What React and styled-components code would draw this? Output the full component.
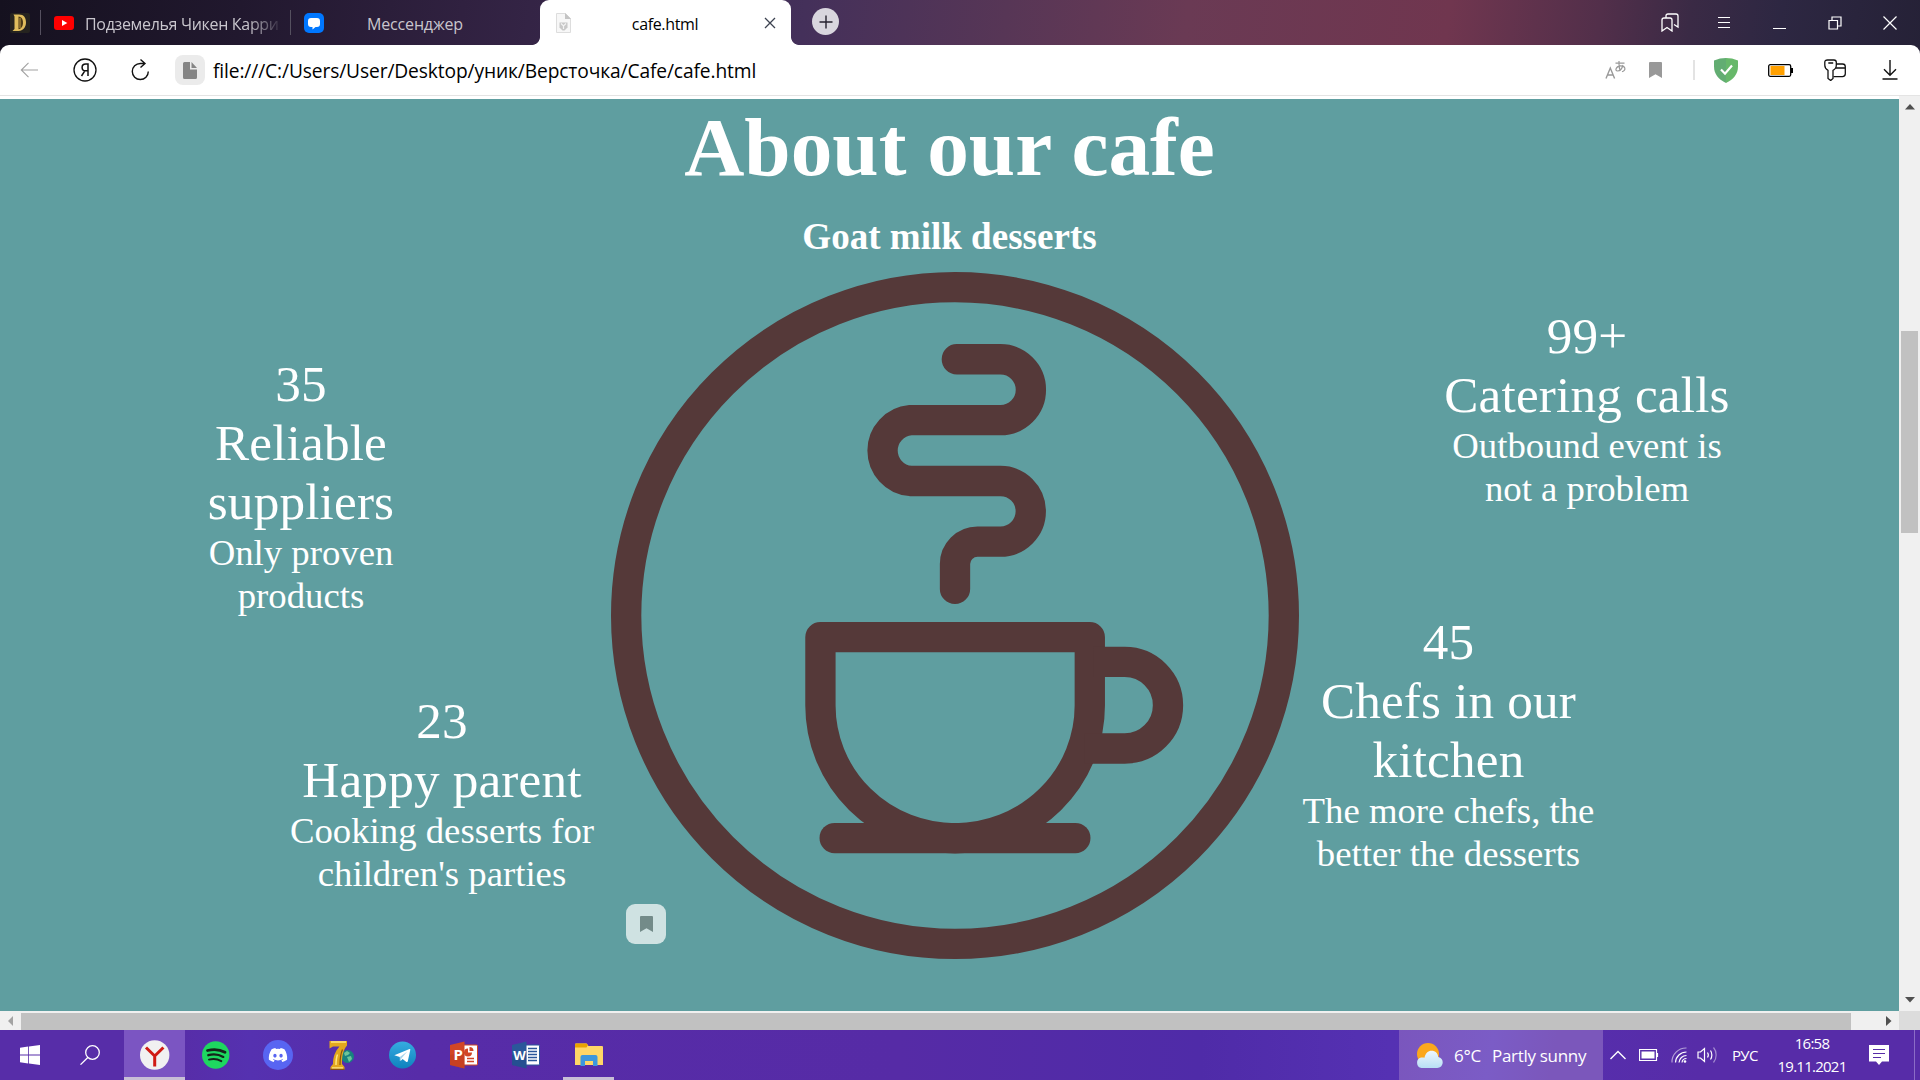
import React from "react";
import styled, { createGlobalStyle } from "styled-components";
import { FaDiscord } from "react-icons/fa";

const UI = `"Open Sans", "Noto Sans", sans-serif`;
const SERIF = `"Liberation Serif", "Times New Roman", serif`;

const GlobalStyle = createGlobalStyle`
  html, body { margin: 0; padding: 0; overflow: hidden; }
  * { box-sizing: border-box; }
  svg { display: block; flex: none; }
`;

const Screen = styled.div`
  width: 1920px;
  height: 1080px;
  display: flex;
  flex-direction: column;
  font-family: ${UI};
  background: #fff;
`;

/* ---------- browser chrome ---------- */

const Chrome = styled.header`
  flex: none;
  height: 96px;
  background: linear-gradient(97deg, #15111f 0, #21182e 240px, #302140 460px, #44305a 800px, #573656 1000px, #6a3a54 1180px, #70364f 1440px, #522f4a 1590px, #3a2a45 1680px, #2d2742 1770px, #252136 1920px);
`;

const TabStrip = styled.div`
  height: 45px;
  display: flex;
  align-items: center;
`;

const Slot = styled.div`
  flex: none;
  width: ${(p) => p.$w}px;
  margin-left: ${(p) => p.$gap || 0}px;
  height: 100%;
  display: flex;
  align-items: center;
  justify-content: center;
`;

const TabDivider = styled.i`
  flex: none;
  width: 1px;
  height: 25px;
  margin: 0 0 1px ${(p) => p.$gap}px;
  background: #55505f;
`;

const TabTitle = styled.span`
  flex: none;
  width: ${(p) => p.$w}px;
  margin-left: ${(p) => p.$gap}px;
  overflow: hidden;
  white-space: nowrap;
  text-align: ${(p) => (p.$center ? "center" : "left")};
  font-size: 16px;
  line-height: 24px;
  padding-top: 2px;
  letter-spacing: ${(p) => p.$track || 0}px;
  color: ${(p) => (p.$active ? "#000" : "#c9c6cd")};
  ${(p) => p.$fade && "mask-image: linear-gradient(90deg, #000 84%, rgba(0, 0, 0, 0.15) 100%);"}
`;

const ActiveTab = styled.div`
  flex: none;
  width: 251px;
  height: 45px;
  margin-left: ${(p) => p.$gap}px;
  display: flex;
  align-items: center;
  background: #fff;
  border-radius: 9px 9px 0 0;
  position: relative;
  &::before,
  &::after {
    content: "";
    position: absolute;
    bottom: 0;
    width: 8px;
    height: 8px;
  }
  &::before {
    left: -8px;
    background: radial-gradient(circle at 0 0, transparent 7.5px, #fff 8.3px);
  }
  &::after {
    right: -8px;
    background: radial-gradient(circle at 100% 0, transparent 7.5px, #fff 8.3px);
  }
`;

const NewTab = styled.div`
  flex: none;
  width: 27px;
  height: 27px;
  margin: 0 0 2px 21px;
  border-radius: 50%;
  background: #d9d6de;
  display: flex;
  align-items: center;
  justify-content: center;
`;

const Spacer = styled.div`
  flex: 1;
`;

const AddressBar = styled.div`
  height: 51px;
  display: flex;
  align-items: center;
  background: #fff;
  border-radius: 9px 9px 0 0;
  border-bottom: 1px solid #e4e4e4;
`;

const FileBadge = styled.div`
  flex: none;
  width: 30px;
  height: 30px;
  margin-left: 25px;
  border-radius: 8px;
  background: #ebebeb;
  display: flex;
  align-items: center;
  justify-content: center;
`;

const Url = styled.span`
  margin-left: 8px;
  padding-top: 2px;
  font-size: 19.2px;
  line-height: 30px;
  letter-spacing: -0.12px;
  white-space: nowrap;
  color: #000;
`;

const ToolDivider = styled.i`
  flex: none;
  width: 2px;
  height: 20px;
  margin-left: 31px;
  background: #e3e3e3;
`;

/* ---------- page ---------- */

const Viewport = styled.div`
  flex: none;
  height: 915px;
  display: flex;
`;

const Page = styled.main`
  flex: none;
  width: 1899px;
  margin-top: 3px;
  background: #5f9ea0;
  color: #fff;
  font-family: ${SERIF};
  text-align: center;
  position: relative;
  overflow: hidden;
`;

const Title = styled.h1`
  margin: 0;
  font-size: 83.3px;
  line-height: 96px;
`;

const Subtitle = styled.h2`
  margin: 0;
  padding-top: 21px;
  height: 77px;
  font-size: 37.05px;
  line-height: 42px;
`;

const Columns = styled.section`
  display: grid;
  grid-template-columns: 611px 688px 600px;
`;

const Column = styled.div`
  display: flex;
  flex-direction: column;
  align-items: flex-start;
`;

const Fact = styled.article`
  width: ${(p) => p.$w}px;
  margin: ${(p) => p.$top}px 0 0 ${(p) => p.$left}px;
  white-space: nowrap;
`;

const Big = styled.div`
  font-size: 51.2px;
  line-height: 59px;
  letter-spacing: 0.18px;
`;

const Small = styled.div`
  font-size: 36.75px;
  line-height: 43px;
`;

const SaveButton = styled.div`
  position: absolute;
  left: 626px;
  top: 805px;
  width: 40px;
  height: 40px;
  border-radius: 9px;
  background: #cfe2e2;
  display: flex;
  align-items: center;
  justify-content: center;
`;

const VerticalBar = styled.div`
  flex: none;
  width: 21px;
  background: #f0f0f0;
  display: flex;
  flex-direction: column;
  align-items: center;
  justify-content: space-between;
  padding: 8px 0 8px;
`;

const VerticalThumb = styled.div`
  width: 17px;
  height: 202px;
  margin-bottom: 244px;
  background: #c1c1c1;
`;

const HorizontalBar = styled.div`
  flex: none;
  height: 19px;
  background: #f0f0f0;
  display: flex;
  align-items: center;
`;

const HorizontalThumb = styled.div`
  width: 1830px;
  height: 17px;
  margin-top: 2px;
  background: #c1c1c1;
`;

const BarCorner = styled.div`
  width: 21px;
  height: 19px;
  margin-left: auto;
  background: #dcdcdc;
`;

/* ---------- taskbar ---------- */

const Taskbar = styled.footer`
  flex: none;
  height: 50px;
  display: flex;
  background: linear-gradient(90deg, #572da8 0, #572da8 180px, #5531b0 250px, #572ca8 420px, #562ba6 900px, #4f2ba8 1200px, #5531b3 1390px, #572ca8 1700px, #572ca8 100%);
  color: #fff;
`;

const AppButton = styled.div`
  flex: none;
  width: ${(p) => p.$w}px;
  margin-left: ${(p) => p.$gap || 0}px;
  display: flex;
  align-items: center;
  justify-content: center;
  background: ${(p) => (p.$active ? "#7b55c2" : "transparent")};
  border-bottom: ${(p) => (p.$open ? "3px solid #c8bfd6" : "0")};
  padding-top: ${(p) => (p.$open ? 3 : 0)}px;
`;

const Weather = styled.div`
  flex: none;
  width: 204px;
  display: flex;
  align-items: center;
  padding-left: 17px;
  background: linear-gradient(100deg, #7a56bd, #7b5cc6 45%, #7b57bb 75%);
`;

const TrayText = styled.span`
  flex: none;
  width: ${(p) => p.$w}px;
  margin-left: ${(p) => p.$gap}px;
  font-size: ${(p) => p.$size}px;
  line-height: 24px;
  padding-top: ${(p) => p.$drop || 0}px;
  letter-spacing: ${(p) => p.$track || 0}px;
  white-space: nowrap;
`;

const Clock = styled.div`
  flex: none;
  width: 90px;
  margin-left: 8px;
  display: flex;
  flex-direction: column;
  align-items: center;
  padding-top: 2px;
  font-size: 15px;
  line-height: 23px;
  letter-spacing: -0.75px;
`;

const PeekEdge = styled.div`
  flex: none;
  width: 6px;
  margin-left: 25px;
  border-left: 1px solid #8b6cc6;
`;

const Stroke = ({ w, h, d, color = "#fff", sw = 1.3, ...rest }) => (
  <svg width={w} height={h} viewBox={`0 0 ${w} ${h}`} fill="none" stroke={color} strokeWidth={sw} {...rest}>
    <path d={d} />
  </svg>
);

const Ribbon = ({ w, h, color }) => (
  <svg width={w} height={h} viewBox="0 0 13 16" preserveAspectRatio="none" fill={color}>
    <path d="M1 0h11a1 1 0 0 1 1 1v15l-6.5-3.7L0 16V1a1 1 0 0 1 1-1z" />
  </svg>
);

const CupEmblem = () => (
  <svg width="688" height="688" viewBox="24 26 1498 1498" fill="none" stroke="#553939" strokeWidth="66">
    <ellipse cx="773" cy="774" rx="716" ry="715" />
    <path strokeLinecap="round" d="M777 216H872A66 66 0 0 1 872 348.5H676A66.5 66.5 0 0 0 676 481H872A66 66 0 0 1 872 613H822A49 49 0 0 0 773 662V716" />
    <path strokeLinejoin="round" d="M480 821H1066.5V970A293.25 289 0 0 1 480 970Z" />
    <path d="M1075 875H1142.500A94 94 0 0 1 1142.500 1063.500H1055" />
    <path strokeLinecap="round" d="M511 1258.500H1035" />
  </svg>
);

const FactBlock = ({ big, small, ...place }) => (
  <Fact {...place}>
    {big.map((t) => <Big key={t}>{t}</Big>)}
    {small.map((t) => <Small key={t}>{t}</Small>)}
  </Fact>
);

const Triangle = ({ d, w = 10, h = 6, color = "#505050" }) => (
  <svg width={w} height={h} viewBox={`0 0 ${w} ${h}`} fill={color}><path d={d} /></svg>
);

function Tabs() {
  return (
    <TabStrip>
      <Slot $w={20} $gap={10}>
        <svg width="20" height="20" viewBox="0 0 20 20">
          <rect width="20" height="20" rx="2" fill="#25231f" />
          <path d="M3.500 1.500H9c5 0 7 3.500 7 8 0 4.800-3 8.500-7.500 8.500H2.500l2-2V3.500z" fill="#e0bd5c" />
          <path d="M8.500 3.500c3.300.5 4.500 3 4.500 6.200s-1.500 6-4.500 6.500z" fill="#4b3a16" />
          <path d="M10 5v10" stroke="#c49d42" strokeWidth="1" />
        </svg>
      </Slot>
      <TabDivider $gap={10} />
      <Slot $w={20} $gap={13}>
        <svg width="20" height="14" viewBox="0 0 20 14">
          <rect width="20" height="14" rx="3" fill="#f00" />
          <path d="M8 4l5.300 3L8 10z" fill="#fff" />
        </svg>
      </Slot>
      <TabTitle $w={193} $gap={11} $fade $track={-0.32}>Подземелья Чикен Карри</TabTitle>
      <TabDivider $gap={12} />
      <Slot $w={20} $gap={13}>
        <svg width="20" height="20" viewBox="0 0 20 20">
          <rect width="20" height="20" rx="5" fill="#07f" />
          <path d="M7 5h6q3 0 3 3v3q0 3-3 3h-1.500l-3 2.500v-2.500H7q-3 0-3-3V8q0-3 3-3z" fill="#fff" />
        </svg>
      </Slot>
      <TabTitle $w={120} $gap={31} $center $track={-0.17}>Мессенджер</TabTitle>
      <ActiveTab $gap={65}>
        <Slot $w={15} $gap={16}>
          <svg width="15" height="20" viewBox="0 0 15 20">
            <path d="M.5.5h9l5 5v14H.5z" fill="#f7f7f7" stroke="#ddd" />
            <path d="M9 0l6 6H9z" fill="#c4c4c4" />
            <path d="M3.500 9.500h8v5l-3 3h-2l-3-3z" fill="#c8c8c8" />
            <path d="M5 10.500l2.500 2.500L10 10.500M7.500 13v3" stroke="#f3f3f3" strokeWidth="1.200" fill="none" />
          </svg>
        </Slot>
        <TabTitle $w={90} $gap={49} $center $active $track={-0.35}>cafe.html</TabTitle>
        <Slot $w={12} $gap={54}>
          <Stroke w={12} h={12} color="#3c4250" d="M1 1l10 10M11 1L1 11" />
        </Slot>
      </ActiveTab>
      <NewTab><Stroke w={14} h={14} color="#26222f" sw={1.4} d="M7 .5v13M.5 7h13" /></NewTab>
      <Spacer />
      <Slot $w={18}>
        <Stroke w={18} h={19} d="M1 7q0-2 2-2h6q2 0 2 2v11l-5-3.500L1 18zM5 5V3q0-2 2-2h8q2 0 2 2v11l-4-2.500" />
      </Slot>
      <Slot $w={14} $gap={38}><Stroke w={14} h={12} d="M1 .5h12M1 5.500h12M1 10.500h12" sw={1.1} /></Slot>
      <Slot $w={14} $gap={42}><Stroke w={14} h={13} d="M0 12.500h13" sw={1} /></Slot>
      <Slot $w={14} $gap={41}><Stroke w={14} h={14} sw={1.2} d="M1 4.500h8.500V13H1zM4 4.500V1h9v9H9.500" /></Slot>
      <Slot $w={14} $gap={41}><Stroke w={14} h={14} sw={1.2} d="M.5.5l13 13M13.500.5l-13 13" /></Slot>
      <Slot $w={23} />
    </TabStrip>
  );
}

function Address() {
  return (
    <AddressBar>
      <Slot $w={18} $gap={20}><Stroke w={18} h={16} color="#a2a2a2" sw={1.1} d="M18 8H1.500M8.500.8L1.300 8l7.200 7.200" /></Slot>
      <Slot $w={24} $gap={35}>
        <svg width="24" height="24" viewBox="0 0 24 24" fill="none" stroke="#111" strokeWidth="1.300">
          <circle cx="12" cy="12" r="11" />
          <path d="M15 18V6h-2.300c-2.300 0-3.600 1.300-3.600 3.400 0 2 1.200 3.300 3.300 3.300H15M12 12.700L8.500 18" strokeWidth="1.500" />
        </svg>
      </Slot>
      <Slot $w={20} $gap={33}>
        <Stroke w={20} h={22} color="#111" sw={1.4} d="M18.300 12.500a8 8 0 1 1-8-8h4.500M10.500 0.600l4.500 4-4.500 4" />
      </Slot>
      <FileBadge>
        <svg width="14" height="17" viewBox="0 0 14 17" fill="#858585">
          <path d="M1.500 0H7v7.500h7v8q0 1.500-1.500 1.500h-11Q0 17 0 15.500v-14Q0 0 1.500 0z" />
          <path d="M8.500 0L14 6H8.500z" />
        </svg>
      </FileBadge>
      <Url>file:///C:/Users/User/Desktop/уник/Версточка/Cafe/cafe.html</Url>
      <Spacer />
      <Slot $w={22}>
        <svg width="22" height="20" viewBox="0 0 22 20" fill="none" stroke="#999" strokeWidth="1.400">
          <path d="M1 18.500L5.300 8l4.300 10.500M2.500 15h5.600" />
          <path d="M10.500 3.200h9M14 1c-.3 4 0 7 1.200 10M18 5c-1 4-3.500 6-5.500 6-3 0-1.500-5 3-5.200 5-.2 6 4.500 1.500 6" strokeWidth="1.200" />
        </svg>
      </Slot>
      <Slot $w={13} $gap={22}><Ribbon w={13} h={16} color="#999" /></Slot>
      <ToolDivider />
      <Slot $w={24} $gap={19}>
        <svg width="24" height="25" viewBox="0 0 24 25">
          <path d="M12 0c4 0 8 .8 12 2.500v6C24 16 19.500 21.500 12 25z" fill="#67b86a" />
          <path d="M12 0C8 0 4 .8 0 2.500v6C0 16 4.500 21.500 12 25z" fill="#62ad72" />
          <path d="M7 11.500l4 4.200 7-8.200" fill="none" stroke="#fff" strokeWidth="2.200" />
        </svg>
      </Slot>
      <Slot $w={26} $gap={30}>
        <svg width="26" height="13" viewBox="0 0 26 13">
          <rect x=".7" y=".7" width="22" height="11.600" rx="1.500" fill="#fff" stroke="#000" strokeWidth="1.300" />
          <rect x="2.500" y="2" width="14" height="9" fill="#ffa000" />
          <path d="M23 4h2v5h-2z" />
        </svg>
      </Slot>
      <Slot $w={22} $gap={30}>
        <svg width="22" height="22" viewBox="0 0 22 22" fill="none" stroke="#111" strokeWidth="1.300">
          <path d="M11.500 5H18.500q2.800 0 2.800 2.800v7q0 2.800-2.800 2.800H9.500M12 9h9" />
          <path d="M3.500 1h6.500q2.300 0 2.300 2.300v3q0 3.500-3.300 5v8.200L6.700 21.500 4 19.500v-8.200Q.8 9.800.8 6.300v-3Q.8 1 3.500 1zM4.300 4h4.900" fill="#fff" />
        </svg>
      </Slot>
      <Slot $w={16} $gap={36}><Stroke w={16} h={20} color="#111" sw={1.4} d="M8 0v15M2 9.200l6 6 6-6M.5 19h15" /></Slot>
      <Slot $w={22} />
    </AddressBar>
  );
}

function Cafe() {
  return (
    <Page>
      <Title>About our cafe</Title>
      <Subtitle>Goat milk desserts</Subtitle>
      <Columns>
        <Column>
          <FactBlock $w={200} $left={201} $top={82} big={["35", "Reliable", "suppliers"]} small={["Only proven", "products"]} />
          <FactBlock $w={320} $left={282} $top={74} big={["23", "Happy parent"]} small={["Cooking desserts for", "children's parties"]} />
        </Column>
        <CupEmblem />
        <Column>
          <FactBlock $w={300} $left={138} $top={34} big={["99+", "Catering calls"]} small={["Outbound event is", "not a problem"]} />
          <FactBlock $w={299} $left={0} $top={102} big={["45", "Chefs in our", "kitchen"]} small={["The more chefs, the", "better the desserts"]} />
        </Column>
      </Columns>
      <SaveButton><Ribbon w={13} h={16} color="#738b89" /></SaveButton>
    </Page>
  );
}

const Office = ({ color, dark, letter, children }) => (
  <svg width="28" height="28" viewBox="0 0 28 28">
    <rect x="13" y="4" width="14.500" height="20" rx="1" fill="#fff" stroke={color} />
    {children}
    <path d="M0 4L14.500 .5v27L0 24z" fill={color} />
    <path d="M0 14l14.500-3v16.500L0 24z" fill={dark} opacity=".4" />
    <text x={letter === "W" ? 1.2 : 3.5} y="19" fontSize={letter === "W" ? 13 : 15} fontWeight="700" fill="#fff" fontFamily={UI}>{letter}</text>
  </svg>
);

function Apps() {
  return (
    <>
      <AppButton $w={60}>
        <svg width="20" height="20" viewBox="0 0 20 20" fill="#fff">
          <path d="M0 2.800L8.200 1.600v7.900H0zM9 1.500L20 0v9.500H9zM0 10.500h8.200v7.900L0 17.200zM9 10.500h11V20L9 18.500z" />
        </svg>
      </AppButton>
      <AppButton $w={60}>
        <Stroke w={20} h={20} sw={1.3} d="M19.300 7.500a6.800 6.800 0 1 1-13.600 0a6.800 6.800 0 1 1 13.600 0zM7.800 12.500L.5 19.600" />
      </AppButton>
      <AppButton $w={61} $gap={4} $active $open>
        <svg width="30" height="30" viewBox="0 0 30 30">
          <circle cx="14.700" cy="15" r="14.700" fill="#f1f1f1" />
          <path d="M6 7.500l8.700 8.500 8.700-8.500M14.700 15.500v11" fill="none" stroke="#d01b14" strokeWidth="3" />
        </svg>
      </AppButton>
      <AppButton $w={62}>
        <svg width="28" height="28" viewBox="0 0 28 28" fill="none" stroke="#15241a" strokeLinecap="round">
          <circle cx="13.700" cy="14" r="13.700" fill="#1ed760" stroke="none" />
          <path d="M5.500 9.500c6-1.600 12.500-1 17.500 1.800" strokeWidth="2.800" />
          <path d="M6.300 14.200c5-1.400 10.500-.8 15 1.700" strokeWidth="2.300" />
          <path d="M7 18.600c4-1.100 8.500-.7 12.300 1.500" strokeWidth="2" />
        </svg>
      </AppButton>
      <AppButton $w={62}>
        <svg width="30" height="30" viewBox="0 0 30 30">
          <circle cx="15" cy="15" r="15" fill="#5865f2" />
          <FaDiscord x="5" y="5" width="20" height="20" size={20} color="#fff" />
        </svg>
      </AppButton>
      <AppButton $w={62} $gap={2}>
        <svg width="26" height="30" viewBox="0 0 26 30">
          <circle cx="18.500" cy="16.500" r="6.500" fill="#17837f" />
          <path d="M15 13l3-2 3 2-2 2-3 1zM18 17l4-1 1 3-3 3z" fill="#6cc59a" />
          <path d="M.5 1H18v4.500C13.500 11 13 17 13 24l2.500 3v2.500h-14V27L4 24c0-7 2-12.500 6.500-17.500H4L.5 8.500z" fill="#e3a81e" />
          <path d="M2 2h15M8.500 14.500C7 18 7 21 7 25M3 28h11" stroke="#ffe680" strokeWidth="1.500" fill="none" />
          <path d="M13.500 9.500C11.500 14 11 18 11 25M1.500 29.300h14" stroke="#8a5210" strokeWidth="1.200" fill="none" />
        </svg>
      </AppButton>
      <AppButton $w={60}>
        <svg width="28" height="28" viewBox="0 0 28 28">
          <defs><linearGradient id="tg" x2="0" y2="1"><stop stopColor="#36ace0" /><stop offset="1" stopColor="#0f82be" /></linearGradient></defs>
          <circle cx="13.500" cy="14" r="13.500" fill="url(#tg)" />
          <path d="M5.300 14.200L20.500 8q1-.3.800.8l-2.500 11.500q-.3 1.200-1.400.6l-3.800-2.800-2 2-.8-4z" fill="#fff" />
          <path d="M10.800 16l7.500-5.500-5.500 6.500-2 3z" fill="#a9d5ec" />
        </svg>
      </AppButton>
      <AppButton $w={62}>
        <Office color="#d24625" dark="#b7371b" letter="P">
          <path d="M18 7.500a4 4 0 1 0 4 4h-4z" fill="#d24625" />
          <path d="M19.500 6v4h4a4 4 0 0 0-4-4z" fill="#d24625" />
          <path d="M17 17.500h7M17 20.500h7" stroke="#d24625" strokeWidth="1.500" />
        </Office>
      </AppButton>
      <AppButton $w={62}>
        <Office color="#2b579a" dark="#1e4484" letter="W">
          <path d="M16 7.500h9M16 10.500h9M16 13.500h9M16 16.500h9M16 19.500h9" stroke="#2b579a" strokeWidth="1.400" />
        </Office>
      </AppButton>
      <AppButton $w={51} $gap={6} $open>
        <svg width="28" height="24" viewBox="0 0 28 24">
          <path d="M0 1.500Q0 .5 1 .5h10.500L13.500 3H27q1 0 1 1v18H0z" fill="#ffd667" />
          <path d="M0 4V1.500Q0 .5 1 .5h10.500l1.500 1.500L11.500 4.500H0z" fill="#e9a200" />
          <path d="M5.500 23V14q0-2 2-2h13q2 0 2 2v9h-4.500v-5h-8v5z" fill="#3d97dd" />
        </svg>
      </AppButton>
    </>
  );
}

function Tray() {
  return (
    <>
      <Weather>
        <svg width="27" height="25" viewBox="0 0 27 25">
          <defs><linearGradient id="cl" x2="0" y2="1"><stop stopColor="#eef8fe" /><stop offset="1" stopColor="#b8dff5" /></linearGradient></defs>
          <circle cx="12" cy="11" r="11" fill="#fba81c" />
          <path d="M5.500 25a5.400 5.400 0 0 1-.5-10.500c1.500-.2 2.500 0 3.500.3C9.500 10 12 7.800 15.500 7.800c4 0 6.500 2.700 6.700 6.200 3 .5 4.500 2.800 4.500 5.300 0 3.500-2.500 5.700-5.500 5.700z" fill="url(#cl)" />
        </svg>
        <TrayText $w={28} $gap={11} $size={17} $track={-0.3} $drop={2}>6°C</TrayText>
        <TrayText $w={100} $gap={10} $size={17} $track={-0.3} $drop={2}>Partly sunny</TrayText>
      </Weather>
      <Slot $w={16} $gap={7}><Stroke w={16} h={10} sw={1.4} d="M.5 9L8 1.500 15.500 9" /></Slot>
      <Slot $w={20} $gap={13}>
        <svg width="20" height="12" viewBox="0 0 20 12" fill="none" stroke="#fff">
          <path d="M.5.500h17v11H.5zM18.500 4v4" strokeWidth="1.200" /><path d="M2.500 2.500h13v7h-13z" fill="#fff" stroke="none" />
        </svg>
      </Slot>
      <Slot $w={17} $gap={12}>
        <svg width="17" height="17" viewBox="0 0 17 17" fill="none" stroke="#fff" strokeWidth="1.200">
          <path d="M1 15.500A14 14 0 0 1 15.500 1" opacity=".55" />
          <path d="M4.500 15.500A11 11 0 0 1 15.500 5M8 15.500A7.500 7.500 0 0 1 15.500 8.500" />
          <path d="M11 15.500A4.500 4.500 0 0 1 15.500 11.500" />
          <circle cx="14" cy="14.500" r="1.300" fill="#fff" stroke="none" />
        </svg>
      </Slot>
      <Slot $w={21} $gap={9}>
        <svg width="21" height="18" viewBox="0 0 21 18" fill="none" stroke="#fff" strokeWidth="1.200">
          <path d="M1 6h2.500L7.500 2.500v13L3.500 12H1zM10.500 6.500c1 1.500 1 3.500 0 5M13.500 4.500c1.800 2.500 1.800 6.500 0 9" />
          <path d="M16.500 1.500c3.500 4 3.500 11 0 15" opacity=".45" />
        </svg>
      </Slot>
      <Slot $w={27} $gap={14}><TrayText $w={27} $gap={0} $size={15} $track={-0.7}>РУС</TrayText></Slot>
      <Clock><span>16:58</span><span>19.11.2021</span></Clock>
      <Slot $w={20} $gap={12}>
        <svg width="20" height="20" viewBox="0 0 20 20">
          <path d="M0 0h20v16.500h-7L10 20l-3-3.500H0z" fill="#fff" />
          <path d="M4 4.500h12M4 8.500h12M4 12.500h8" stroke="#572ca8" strokeWidth="1.200" />
        </svg>
      </Slot>
      <PeekEdge />
    </>
  );
}

export default function App() {
  return (
    <Screen>
      <GlobalStyle />
      <Chrome>
        <Tabs />
        <Address />
      </Chrome>
      <Viewport>
        <Cafe />
        <VerticalBar>
          <Triangle d="M5 0l5 5.500H0z" />
          <VerticalThumb />
          <Triangle d="M0 0h10L5 5.500z" />
        </VerticalBar>
      </Viewport>
      <HorizontalBar>
        <Slot $w={21}><Triangle w={5} h={10} color="#a3a3a3" d="M5 0v10L0 5z" /></Slot>
        <HorizontalThumb />
        <Slot $w={20} $gap={28}><Triangle w={6} h={10} d="M0 0v10l5.500-5z" /></Slot>
        <BarCorner />
      </HorizontalBar>
      <Taskbar>
        <Apps />
        <Spacer />
        <Tray />
      </Taskbar>
    </Screen>
  );
}
